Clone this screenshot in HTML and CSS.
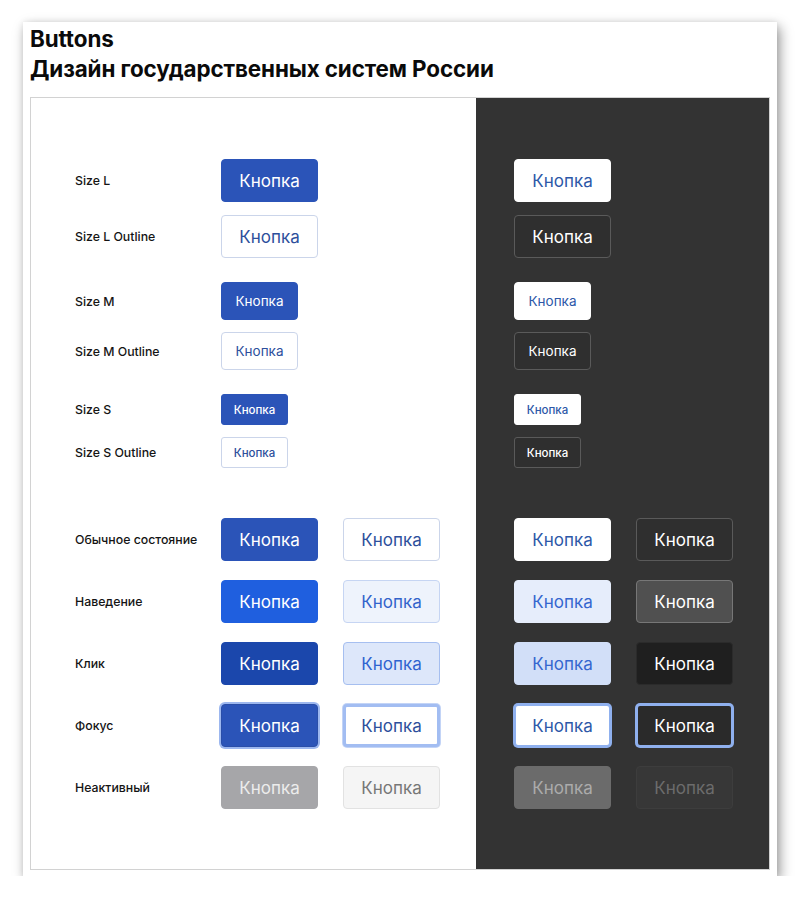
FILE: index.html
```html
<!DOCTYPE html>
<html lang="ru">
<head>
<meta charset="utf-8">
<title>Buttons</title>
<link rel="stylesheet" href="styles.css">
</head>
<body>
<div class="card">
  <h1 class="title">Buttons<br>Дизайн государственных систем России</h1>
  <div class="frame">
    <section class="panel light">
      <div class="group group-l">
        <div class="row"><span class="label">Size L</span><button class="btn btn-l primary">Кнопка</button></div>
        <div class="row"><span class="label">Size L Outline</span><button class="btn btn-l outline">Кнопка</button></div>
      </div>
      <div class="group group-m">
        <div class="row"><span class="label">Size M</span><button class="btn btn-m primary">Кнопка</button></div>
        <div class="row"><span class="label">Size M Outline</span><button class="btn btn-m outline">Кнопка</button></div>
      </div>
      <div class="group group-s">
        <div class="row"><span class="label">Size S</span><button class="btn btn-s primary">Кнопка</button></div>
        <div class="row"><span class="label">Size S Outline</span><button class="btn btn-s outline">Кнопка</button></div>
      </div>
      <div class="group group-states">
        <div class="row"><span class="label">Обычное состояние</span><button class="btn btn-l primary">Кнопка</button><button class="btn btn-l outline">Кнопка</button></div>
        <div class="row"><span class="label">Наведение</span><button class="btn btn-l primary is-hover">Кнопка</button><button class="btn btn-l outline is-hover">Кнопка</button></div>
        <div class="row"><span class="label">Клик</span><button class="btn btn-l primary is-active">Кнопка</button><button class="btn btn-l outline is-active">Кнопка</button></div>
        <div class="row"><span class="label">Фокус</span><button class="btn btn-l primary is-focus">Кнопка</button><button class="btn btn-l outline is-focus">Кнопка</button></div>
        <div class="row"><span class="label">Неактивный</span><button class="btn btn-l primary is-disabled">Кнопка</button><button class="btn btn-l outline is-disabled">Кнопка</button></div>
      </div>
    </section>
    <section class="panel dark">
      <div class="group group-l">
        <div class="row"><button class="btn btn-l inverse">Кнопка</button></div>
        <div class="row"><button class="btn btn-l ghost">Кнопка</button></div>
      </div>
      <div class="group group-m">
        <div class="row"><button class="btn btn-m inverse">Кнопка</button></div>
        <div class="row"><button class="btn btn-m ghost">Кнопка</button></div>
      </div>
      <div class="group group-s">
        <div class="row"><button class="btn btn-s inverse">Кнопка</button></div>
        <div class="row"><button class="btn btn-s ghost">Кнопка</button></div>
      </div>
      <div class="group group-states">
        <div class="row"><button class="btn btn-l inverse">Кнопка</button><button class="btn btn-l ghost">Кнопка</button></div>
        <div class="row"><button class="btn btn-l inverse is-hover">Кнопка</button><button class="btn btn-l ghost is-hover">Кнопка</button></div>
        <div class="row"><button class="btn btn-l inverse is-active">Кнопка</button><button class="btn btn-l ghost is-active">Кнопка</button></div>
        <div class="row"><button class="btn btn-l inverse is-focus">Кнопка</button><button class="btn btn-l ghost is-focus">Кнопка</button></div>
        <div class="row"><button class="btn btn-l inverse is-disabled">Кнопка</button><button class="btn btn-l ghost is-disabled">Кнопка</button></div>
      </div>
    </section>
  </div>
</div>
</body>
</html>
```
FILE: styles.css
```css
* { box-sizing: border-box; }

html, body {
  margin: 0;
  background: #ffffff;
}

body {
  font-family: Inter, "Noto Sans", sans-serif;
  color: #111;
  padding: 22px 23px 0 23px;
}

.card {
  width: 754px;
  background: #ffffff;
  padding: 2px 7px 6px 7px;
  box-shadow: 3px 5px 12px rgba(0, 0, 0, 0.4), 0 0 6px rgba(0, 0, 0, 0.08);
}

.title {
  margin: 0 0 13px 0;
  font-size: 22.4px;
  line-height: 30px;
  font-weight: 700;
  letter-spacing: -0.1px;
  color: #0a0a0a;
}

.frame {
  display: flex;
  height: 773px;
  border: 1px solid #d2d2d2;
}

.panel {
  padding-top: 61px;
}

.panel.light {
  width: 445px;
  background: #ffffff;
  padding-left: 44px;
}

.panel.dark {
  flex: 1;
  background: #333333;
  padding-left: 38px;
}

.group {
  display: flex;
  flex-direction: column;
}

.group-l { gap: 13px; }
.group-m { gap: 12px; margin-top: 24px; }
.group-s { gap: 12px; margin-top: 24px; }
.group-states { gap: 19px; margin-top: 50px; }

.row {
  display: flex;
  align-items: center;
  gap: 25px;
}

.label {
  width: 121px;
  flex: none;
  white-space: nowrap;
  font-size: 12.3px;
  font-weight: 500;
  color: #141414;
}

/* Buttons */

.btn {
  flex: none;
  margin: 0;
  font-family: Inter, "Noto Sans", sans-serif;
  border: 1px solid transparent;
  border-radius: 4px;
  display: inline-flex;
  align-items: center;
  justify-content: center;
  cursor: pointer;
}

.btn-l {
  width: 97px;
  height: 43px;
  font-size: 17px;
  font-weight: 400;
}

.btn-m {
  width: 77px;
  height: 38px;
  font-size: 13.5px;
  font-weight: 400;
}

.btn-s {
  width: 67px;
  height: 31px;
  font-size: 11.5px;
  font-weight: 500;
  border-radius: 3px;
}

/* light theme */

.primary {
  background: #2b54b8;
  border-color: #2b54b8;
  color: #ffffff;
}
.primary.is-hover { background: #1f5fdf; border-color: #1f5fdf; }
.primary.is-active { background: #1b47ac; border-color: #1b47ac; }
.primary.is-focus {
  background: #2b54b8;
  border-color: #2a4ea8;
  box-shadow: 0 0 0 2px #9cb7ef;
}
.primary.is-disabled {
  background: #a6a6a9;
  border-color: #a6a6a9;
  color: #ececec;
}

.outline {
  background: #ffffff;
  border-color: #cbd5ea;
  color: #2d4f9c;
}
.outline.is-hover { background: #eef3fc; border-color: #c6d5f3; color: #3363cb; }
.outline.is-active { background: #dde7fa; border-color: #a6bff0; color: #2f63d0; }
.outline.is-focus {
  background: #ffffff;
  border: 3px solid #a2bdf2;
  color: #2d4f9c;
  box-shadow: 0 0 0 1px #c3d4f6;
}
.outline.is-disabled {
  background: #f5f5f5;
  border-color: #e2e2e2;
  color: #777777;
}

/* dark theme */

.inverse {
  background: #ffffff;
  border-color: #ffffff;
  color: #2d58a8;
}
.inverse.is-hover { background: #e6edfb; border-color: #e6edfb; color: #3566cf; }
.inverse.is-active { background: #d2dff8; border-color: #d2dff8; color: #3566cf; }
.inverse.is-focus {
  background: #ffffff;
  border: 2px solid #8fb0ee;
  box-shadow: 0 0 0 1px #8fb0ee;
}
.inverse.is-disabled {
  background: #6b6b6b;
  border-color: #6b6b6b;
  color: #ababab;
}

.ghost {
  background: #2f2f2f;
  border-color: #5a5a5a;
  color: #ffffff;
}
.ghost.is-hover { background: #505050; border-color: #777777; }
.ghost.is-active { background: #1f1f1f; border-color: #2b2b2b; }
.ghost.is-focus {
  background: #2a2a2a;
  border: 2px solid #8fb0ee;
  box-shadow: 0 0 0 1px #8fb0ee;
}
.ghost.is-disabled {
  background: #373737;
  border-color: #3d3d3d;
  color: #6c6c6c;
}
```
